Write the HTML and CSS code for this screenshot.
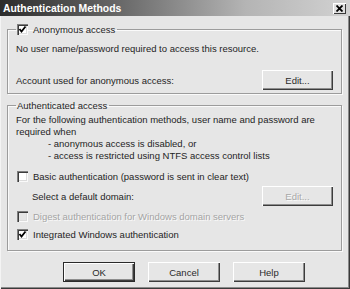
FILE: index.html
```html
<!DOCTYPE html>
<html lang="en">
<head>
    <meta charset="UTF-8">
    <meta name="viewport" content="width=device-width, initial-scale=1.0">
    <title>Authentication Methods</title>
    <link rel="stylesheet" href="styles.css">
</head>
<body>

    <div class="dialog">

        <!-- Title Bar -->
        <div class="title-bar">
            <span class="title">Authentication Methods</span>
            <span class="close-btn">
                <svg width="7" height="7" viewBox="0 0 7 7">
                    <path d="M0.5 0.5 L6.5 6.5 M6.5 0.5 L0.5 6.5" stroke="#000" stroke-width="1.8"/>
                </svg>
            </span>
        </div>

        <div class="content">

            <!-- Anonymous access group -->
            <fieldset class="group group-anon">
                <legend>
                    <span class="check checked">
                        <svg width="9" height="9" viewBox="0 0 9 9">
                            <path d="M1.5 4 L3.5 6.5 L7.5 1.5" fill="none" stroke="#000" stroke-width="1.8"/>
                        </svg>
                    </span>
                    Anonymous access
                </legend>
                <div class="line">No user name/password required to access this resource.</div>
                <div class="row row-account">
                    <span>Account used for anonymous access:</span>
                    <button class="btn">Edit...</button>
                </div>
            </fieldset>

            <!-- Authenticated access group -->
            <fieldset class="group group-auth">
                <legend>Authenticated access</legend>
                <div class="line">For the following authentication methods, user name and password are</div>
                <div class="line">required when</div>
                <div class="line indent">- anonymous access is disabled, or</div>
                <div class="line indent">- access is restricted using NTFS access control lists</div>

                <div class="option option-basic">
                    <span class="check"></span>
                    Basic authentication (password is sent in clear text)
                </div>
                <div class="row row-domain">
                    <span>Select a default domain:</span>
                    <button class="btn disabled">Edit...</button>
                </div>
                <div class="option option-digest disabled">
                    <span class="check"></span>
                    Digest authentication for Windows domain servers
                </div>
                <div class="option option-integrated">
                    <span class="check checked">
                        <svg width="9" height="9" viewBox="0 0 9 9">
                            <path d="M1.5 4 L3.5 6.5 L7.5 1.5" fill="none" stroke="#000" stroke-width="1.8"/>
                        </svg>
                    </span>
                    Integrated Windows authentication
                </div>
            </fieldset>

            <!-- Dialog buttons -->
            <div class="buttons">
                <button class="btn btn-main default">OK</button>
                <button class="btn btn-main">Cancel</button>
                <button class="btn btn-main">Help</button>
            </div>

        </div>
    </div>

</body>
</html>
```

FILE: styles.css
```css
body {
    margin: 0;
    padding: 0;
    background-color: #e6e6e6;
    font-family: "Liberation Sans", Arial, sans-serif;
    font-size: 9.5px;
    color: #1e1e1e;
}

.dialog {
    width: 350px;
    height: 289px;
    box-sizing: border-box;
    background-color: #e6e6e6;
    box-shadow: inset 1px 0 #f4f4f4, inset -1px -1px #3a3a3a, inset -2px -2px #8a8a8a;
}

/* Title Bar */
.title-bar {
    height: 16px;
    display: flex;
    align-items: center;
    justify-content: space-between;
    padding: 0 4px 0 3px;
    background: linear-gradient(to right, #2c2c2c 0%, #6a6a6a 35%, #b4b4b4 70%, #d2d2d2 100%);
}

.title {
    color: #ffffff;
    font-weight: bold;
    font-size: 10.4px;
}

.close-btn {
    width: 13px;
    height: 11px;
    box-sizing: border-box;
    display: flex;
    align-items: center;
    justify-content: center;
    background-color: #e0e0e0;
    box-shadow: inset 1px 1px #ffffff, inset -1px -1px #3a3a3a;
}

.content {
    padding: 7px 8px 0 7px;
}

/* Group boxes */
.group {
    margin: 0;
    border: 1px solid #9c9c9c;
    box-shadow: inset 1px 1px #fafafa, 1px 1px #fafafa;
    padding: 0 8px 0 8px;
}

.group legend {
    padding: 0 2px 0 1px;
    line-height: 13px;
    display: flex;
    align-items: center;
    gap: 3px;
}

.group-anon {
    padding-top: 7px;
    padding-bottom: 3px;
}

.group-auth {
    margin-top: 5px;
    padding-top: 2px;
    padding-bottom: 9px;
}

.line {
    line-height: 12px;
    white-space: nowrap;
}

.indent {
    padding-left: 32px;
}

.row {
    display: flex;
    align-items: center;
    justify-content: space-between;
    padding-right: 0;
}

.row-account {
    margin-top: 15px;
}

.row-domain {
    margin-top: 3px;
    padding-left: 16px;
}

/* Checkbox options */
.option {
    display: flex;
    align-items: center;
    gap: 3px;
    line-height: 13px;
    white-space: nowrap;
    margin-left: 1px;
}

.option-basic {
    margin-top: 8px;
}

.option-digest {
    margin-top: 4px;
}

.option-integrated {
    margin-top: 5px;
}

.check {
    width: 11px;
    height: 11px;
    box-sizing: border-box;
    display: inline-flex;
    align-items: center;
    justify-content: center;
    background-color: #ffffff;
    box-shadow: inset 1px 1px #7e7e7e, inset 2px 2px #3c3c3c, inset -1px -1px #fafafa, inset -2px -2px #dcdcdc;
    margin-right: 2px;
}

.option.disabled {
    color: #a4a4a4;
    text-shadow: 1px 1px #fafafa;
}

.option.disabled .check {
    background-color: #e6e6e6;
}

/* Buttons */
.btn {
    width: 71px;
    height: 20px;
    box-sizing: border-box;
    margin: 0;
    padding: 0;
    border: none;
    background-color: #e6e6e6;
    font-family: "Liberation Sans", Arial, sans-serif;
    font-size: 9.5px;
    color: #2a2a2a;
    box-shadow: inset 1px 1px #ffffff, inset -1px -1px #3c3c3c, inset -2px -2px #8e8e8e;
}

.btn.disabled {
    color: #a8a8a8;
    text-shadow: 1px 1px #fafafa;
}

.buttons {
    display: flex;
    gap: 13px;
    padding-left: 56px;
    margin-top: 11px;
}

.btn-main {
    width: 72px;
}

.btn.default {
    box-shadow: inset 0 0 0 1px #2a2a2a, inset 2px 2px #ffffff, inset -2px -2px #3c3c3c, inset -3px -3px #8e8e8e;
}
```
